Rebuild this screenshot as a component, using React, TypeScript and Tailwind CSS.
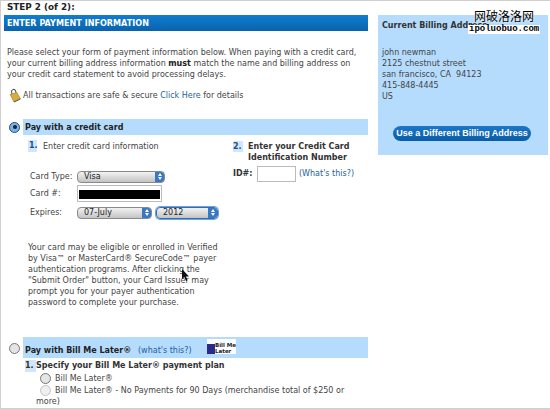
import React from "react";

const font = { fontFamily: '"DejaVu Sans", Verdana, sans-serif' };

function Radio({ checked = false, faint = false }: { checked?: boolean; faint?: boolean }) {
  return (
    <span
      className={`inline-flex h-[11px] w-[11px] shrink-0 items-center justify-center rounded-full border ${
        checked
          ? "border-[#1c4f86] bg-[#7fb2e5]"
          : faint
          ? "border-[#c4c4c4] bg-[#efefef]"
          : "border-[#777] bg-[#e4e4e4]"
      }`}
    >
      {checked && <span className="h-[4px] w-[4px] rounded-full bg-[#0d2036]" />}
    </span>
  );
}

function Select({ label, width, focused = false }: { label: string; width: string; focused?: boolean }) {
  return (
    <div
      className={`flex h-[12px] items-center justify-between rounded-[4px] border pl-[6px] ${width} ${
        focused ? "border-[#2f6fb5] ring-1 ring-[#6ea4de]" : "border-[#8a8a8a]"
      } bg-gradient-to-b from-[#f2f2f2] to-[#c4c4c4]`}
    >
      <span className="text-[8px] leading-none text-[#222]">{label}</span>
      <span className="flex h-full w-[9px] flex-col items-center justify-center gap-[1px] rounded-r-[3px] bg-[#3b78c4]">
        <span className="h-0 w-0 border-x-[2px] border-b-[3px] border-x-transparent border-b-white" />
        <span className="h-0 w-0 border-x-[2px] border-t-[3px] border-x-transparent border-t-white" />
      </span>
    </div>
  );
}

function Lock() {
  return (
    <svg width="13" height="15" viewBox="0 0 14 17" className="shrink-0">
      <path d="M3 7 L2.5 4 C2.5 1.5 6 0.5 7 3 L7.6 5.5" fill="none" stroke="#555" strokeWidth="1.2" />
      <path d="M1 7.5 L8.5 5 L12.5 12 L5 15.5 Z" fill="#d9ad3c" stroke="#8d6d1d" strokeWidth="0.6" />
      <path d="M5 15.5 L12.5 12 L12.5 13 L5.5 16.5 Z" fill="#555" />
    </svg>
  );
}

export default function App() {
  return (
    <div
      className="relative flex h-[409px] w-[550px] overflow-hidden border-y border-l border-[#d0d0d0] bg-white text-[8px] whitespace-nowrap text-[#444]"
      style={font}
    >
      {/* left column */}
      <div className="flex w-[367px] shrink-0 flex-col">
        <div className="ml-[6px] h-[13px] text-[8.8px] leading-[13px] font-bold text-[#222]">STEP 2 (of 2):</div>
        <div className="mt-[1px] ml-[3px] h-[16px] bg-gradient-to-b from-[#0f7fcf] to-[#0a62ad] pl-[3px] text-[8.1px] leading-[16px] font-bold text-white">
          ENTER PAYMENT INFORMATION
        </div>
        <p className="mt-[16px] ml-[6px] leading-[11px]">
          Please select your form of payment information below. When paying with a credit card,
          <br />
          your current billing address information <b className="text-[#222]">must</b> match the name and billing address on
          <br />
          your credit card statement to avoid processing delays.
        </p>
        <div className="mt-[7px] ml-[8px] flex h-[17px] items-center gap-[1px] pt-[1px]">
          <Lock />
          <span>
            All transactions are safe &amp; secure <span className="text-[#1c5f9f]">Click Here</span> for details
          </span>
        </div>

        {/* credit card */}
        <div className="mt-[16px] flex h-[16px] items-center">
          <span className="ml-[8px] flex w-[14px]">
            <Radio checked />
          </span>
          <div className="h-full flex-1 bg-[#b5dcfd] pl-[2px] leading-[17px] font-bold text-[#222]">
            Pay with a credit card
          </div>
        </div>
        <div className="flex">
          <div className="w-[232px] shrink-0">
            <div className="mt-[5px] ml-[27px] flex h-[12px] items-center">
              <span className="mr-[6px] w-[9px] bg-[#cfe6fb] pl-[1px] font-bold text-[#1c4f86]">1.</span>
              <span className="pt-[1px]">Enter credit card information</span>
            </div>
            <div className="mt-[18px] ml-[29px] flex items-center">
              <span className="w-[47px] pt-[1px]">Card Type:</span>
              <Select label="Visa" width="w-[88px]" />
            </div>
            <div className="mt-[2px] ml-[29px] flex items-center">
              <span className="w-[47px]">Card #:</span>
              <div className="h-[17px] w-[85px] border border-[#bbb] px-[1px]">
                <div className="mt-[4px] h-[9px] bg-black" />
              </div>
            </div>
            <div className="mt-[4px] ml-[29px] flex items-center">
              <span className="w-[47px] pt-[1px]">Expires:</span>
              <Select label="07-July" width="w-[75px]" />
              <span className="ml-[4px]" />
              <Select label="2012" width="w-[62px]" focused />
            </div>
          </div>
          <div className="flex-1">
            <div className="mt-[6px] flex leading-[11px] font-bold text-[#333]">
              <span className="mr-[5px] h-[11px] w-[10px] bg-[#cfe6fb] text-[#1c4f86]">2.</span>
              <span>
                Enter your Credit Card
                <br />
                Identification Number
              </span>
            </div>
            <div className="mt-[3px] flex items-center">
              <b className="w-[24px] text-[#333]">ID#:</b>
              <div className="h-[16px] w-[39px] border border-[#bbb] bg-white" />
              <span className="ml-[3px] text-[#1c5f9f]">(What's this?)</span>
            </div>
          </div>
        </div>
        <p className="mt-[23px] ml-[27px] leading-[11px]">
          Your card may be eligible or enrolled in Verified
          <br />
          by Visa™ or MasterCard® SecureCode™ payer
          <br />
          authentication programs. After clicking the
          <br />
          "Submit Order" button, your Card Issuer may
          <br />
          prompt you for your payer authentication
          <br />
          password to complete your purchase.
        </p>

        {/* bill me later */}
        <div className="mt-[29px] flex h-[21px] items-center">
          <span className="ml-[8px] flex w-[14px] translate-y-[1px]">
            <Radio />
          </span>
          <div className="flex h-full flex-1 items-center bg-[#b5dcfd] pt-[6px] pl-[2px] text-[#222]">
            <b className="w-[113px]">Pay with Bill Me Later®</b>
            <span className="w-[69px] text-[#1c5f9f]">(what's this?)</span>
            <span className="mb-[6px] flex h-[15px] w-[29px] -translate-y-[1px] items-end bg-white">
              <span className="h-[10px] w-[10px] bg-[#2a2a8c]" />
              <span className="text-[5.5px] leading-[6px] font-bold text-[#222]">
                Bill Me
                <br />
                Later
              </span>
            </span>
          </div>
        </div>
        <div className="mt-[2px] ml-[24px] flex h-[12px] items-center font-bold text-[#333]">
          <span className="w-[11px] bg-[#cfe6fb]">1.</span>
          Specify your Bill Me Later® payment plan
        </div>
        <div className="ml-[39px] flex h-[12px] items-center gap-[4px]">
          <Radio />
          <span className="pt-[1px]">Bill Me Later®</span>
        </div>
        <div className="ml-[39px] flex h-[12px] items-center gap-[4px]">
          <Radio faint />
          <span className="pt-[1px]">Bill Me Later® - No Payments for 90 Days (merchandise total of $250 or</span>
        </div>
        <div className="ml-[35px] h-[12px] leading-[12px]">more)</div>
      </div>

      {/* billing sidebar */}
      <div className="mt-[14px] ml-[10px] flex h-[140px] w-[170px] shrink-0 flex-col bg-[#b5dcfd] pl-[4px]">
        <b className="mt-[5px] h-[11px] leading-[11px] text-[#333]">Current Billing Address</b>
        <div className="mt-[16px] leading-[11px]">
          john newman
          <br />
          2125 chestnut street
          <br />
          san francisco, CA&nbsp; 94123
          <br />
          415-848-4445
          <br />
          US
        </div>
        <div
          className="mt-[24px] ml-[11px] flex h-[15px] w-[138px] items-center justify-center rounded-full bg-gradient-to-b from-[#1a78c8] to-[#0a5ca6] text-[9px] font-bold text-white"
          style={{ fontFamily: '"Liberation Sans", Arial, sans-serif' }}
        >
          Use a Different Billing Address
        </div>
      </div>

      {/* watermark */}
      <div className="absolute top-[8px] left-[467px] flex flex-col items-center">
        <span
          className="h-[15px] text-[12px] leading-[14px] text-black [text-shadow:0_0_2px_white,0_0_2px_white]"
          style={{ fontFamily: '"Noto Sans CJK SC", sans-serif' }}
        >
          网破洛洛网
        </span>
        <span
          className="mt-[1px] bg-white px-[1px] text-[9px] leading-[9px] font-bold text-black"
          style={{ fontFamily: '"Liberation Mono", monospace' }}
        >
          ipoluobuo.com
        </span>
      </div>

      {/* mouse pointer */}
      <svg width="9" height="13" viewBox="0 0 9 13" className="absolute top-[268px] left-[180px]">
        <path d="M1 0 L1 10 L3.3 8 L5 12 L6.5 11.3 L5 7.6 L8 7.4 Z" fill="#111" />
      </svg>
    </div>
  );
}
